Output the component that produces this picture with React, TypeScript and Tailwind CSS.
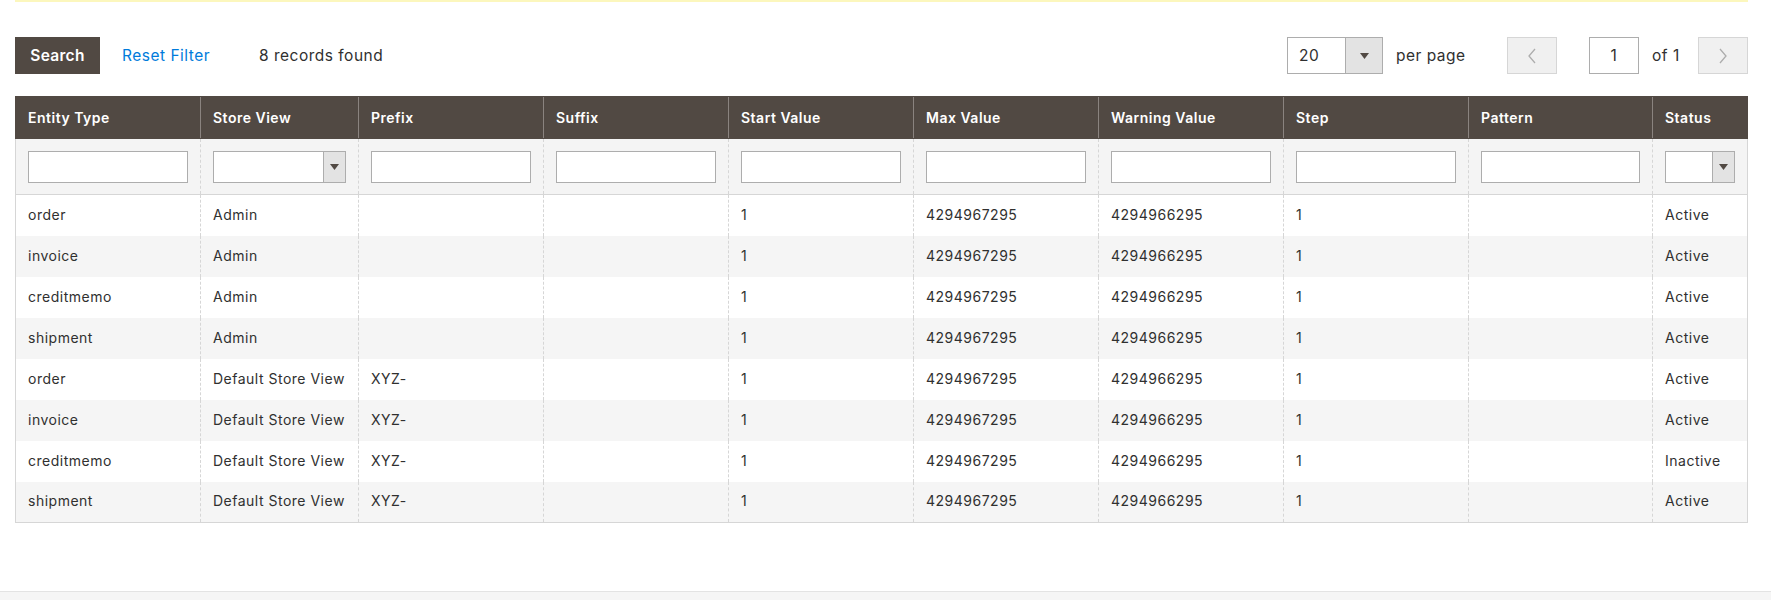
import React from "react";

const cols = [
  { key: "entity", label: "Entity Type", w: 185, filter: "input" },
  { key: "store", label: "Store View", w: 158, filter: "select" },
  { key: "prefix", label: "Prefix", w: 185, filter: "input" },
  { key: "suffix", label: "Suffix", w: 185, filter: "input" },
  { key: "start", label: "Start Value", w: 185, filter: "input" },
  { key: "max", label: "Max Value", w: 185, filter: "input" },
  { key: "warn", label: "Warning Value", w: 185, filter: "input" },
  { key: "step", label: "Step", w: 185, filter: "input" },
  { key: "pattern", label: "Pattern", w: 184, filter: "input" },
  { key: "status", label: "Status", w: 95, filter: "select" },
];

const rows: string[][] = [
  ["order", "Admin", "", "", "1", "4294967295", "4294966295", "1", "", "Active"],
  ["invoice", "Admin", "", "", "1", "4294967295", "4294966295", "1", "", "Active"],
  ["creditmemo", "Admin", "", "", "1", "4294967295", "4294966295", "1", "", "Active"],
  ["shipment", "Admin", "", "", "1", "4294967295", "4294966295", "1", "", "Active"],
  ["order", "Default Store View", "XYZ-", "", "1", "4294967295", "4294966295", "1", "", "Active"],
  ["invoice", "Default Store View", "XYZ-", "", "1", "4294967295", "4294966295", "1", "", "Active"],
  ["creditmemo", "Default Store View", "XYZ-", "", "1", "4294967295", "4294966295", "1", "", "Inactive"],
  ["shipment", "Default Store View", "XYZ-", "", "1", "4294967295", "4294966295", "1", "", "Active"],
];

function Arrow() {
  return (
    <svg width="9" height="6" viewBox="0 0 9 6">
      <path d="M0 0 L9 0 L4.5 6 Z" fill="#514943" />
    </svg>
  );
}

function FilterSelect() {
  return (
    <div className="flex h-[32px] w-full border border-[#adadad] bg-white">
      <div className="flex-1" />
      <div className="flex w-[22px] items-center justify-center border-l border-[#adadad] bg-[#e3e3e3]">
        <Arrow />
      </div>
    </div>
  );
}

export default function App() {
  return (
    <div
      className="flex h-[600px] w-[1771px] flex-col bg-white text-[14px] text-[#303030]"
      style={{ fontFamily: "Inter, 'Open Sans', sans-serif" }}
    >
      <div className="pl-[15px] pr-[23px]">
        <div className="h-[2px] w-full bg-[#fcf7bd]" />
        <div className="mt-[35px] flex h-[37px] items-center text-[15.5px] tracking-[0.5px]">
          <button className="h-[37px] w-[85px] bg-[#514943] text-[15.5px] font-semibold tracking-[0.3px] text-white">
            Search
          </button>
          <span className="ml-[22px] w-[84px] whitespace-nowrap text-[#007bdb]">Reset Filter</span>
          <span className="ml-[53px] whitespace-nowrap text-[#303030]">8 records found</span>
          <div className="flex-1" />
          <div className="flex h-[37px] w-[96px] border border-[#adadad] bg-white">
            <div className="flex flex-1 items-center pl-[11px]">20</div>
            <div className="flex w-[37px] items-center justify-center border-l border-[#adadad] bg-[#e3e3e3]">
              <Arrow />
            </div>
          </div>
          <span className="ml-[13px] w-[72px] whitespace-nowrap">per page</span>
          <button className="ml-[39px] flex h-[37px] w-[50px] items-center justify-center border border-[#d6d6d6] bg-[#f0f0f0]">
            <svg width="10" height="16" viewBox="0 0 10 16">
              <path d="M8 1 L2 8 L8 15" fill="none" stroke="#adadad" strokeWidth="1.3" />
            </svg>
          </button>
          <div className="ml-[32px] flex h-[37px] w-[50px] items-center justify-center border border-[#adadad] bg-white">
            1
          </div>
          <span className="ml-[13px] w-[25px] whitespace-nowrap">of 1</span>
          <button className="ml-[21px] flex h-[37px] w-[50px] items-center justify-center border border-[#d6d6d6] bg-[#f0f0f0]">
            <svg width="10" height="16" viewBox="0 0 10 16">
              <path d="M2 1 L8 8 L2 15" fill="none" stroke="#adadad" strokeWidth="1.3" />
            </svg>
          </button>
        </div>

        <table className="mt-[22px] w-[1732px] table-fixed border-collapse">
          <colgroup>
            {cols.map((c) => (
              <col key={c.key} style={{ width: c.w }} />
            ))}
          </colgroup>
          <thead>
            <tr className="h-[42px] bg-[#514943]">
              {cols.map((c, i) => (
                <th
                  key={c.key}
                  className={`border-y border-[#514943] px-[12px] pb-[1px] text-left text-[14px] font-semibold tracking-[0.5px] text-white ${
                    i === 0 ? "border-l border-l-[#514943]" : "border-l border-l-[#8a837f]"
                  } ${i === cols.length - 1 ? "border-r border-r-[#514943]" : ""}`}
                >
                  {c.label}
                </th>
              ))}
            </tr>
            <tr className="h-[56px] bg-[#f4f4f4]">
              {cols.map((c, i) => (
                <td
                  key={c.key}
                  className={`border-b border-b-[#d6d6d6] px-[12px] ${
                    i === 0
                      ? "border-l border-l-[#d6d6d6]"
                      : "border-l border-l-[#d6d6d6] [border-left-style:dashed]"
                  } ${i === cols.length - 1 ? "border-r border-r-[#d6d6d6]" : ""}`}
                >
                  {c.filter === "input" ? (
                    <div className="h-[32px] w-full border border-[#adadad] bg-white" />
                  ) : (
                    <FilterSelect />
                  )}
                </td>
              ))}
            </tr>
          </thead>
          <tbody>
            {rows.map((r, ri) => (
              <tr key={ri} className={`h-[41px] ${ri % 2 === 1 ? "bg-[#f5f5f5]" : "bg-white"}`}>
                {r.map((v, i) => (
                  <td
                    key={i}
                    className={`whitespace-nowrap px-[12px] pb-[2px] text-[14px] tracking-[0.5px] text-[#303030] ${
                      i === 0
                        ? "border-l border-l-[#d6d6d6]"
                        : "border-l border-l-[#d6d6d6] [border-left-style:dashed]"
                    } ${i === r.length - 1 ? "border-r border-r-[#d6d6d6]" : ""} ${
                      ri === rows.length - 1 ? "border-b border-b-[#d6d6d6]" : ""
                    }`}
                  >
                    {v}
                  </td>
                ))}
              </tr>
            ))}
          </tbody>
        </table>
      </div>
      <div className="flex-1" />
      <div className="h-[9px] border-t border-[#e3e3e3] bg-[#f5f5f5]" />
    </div>
  );
}
